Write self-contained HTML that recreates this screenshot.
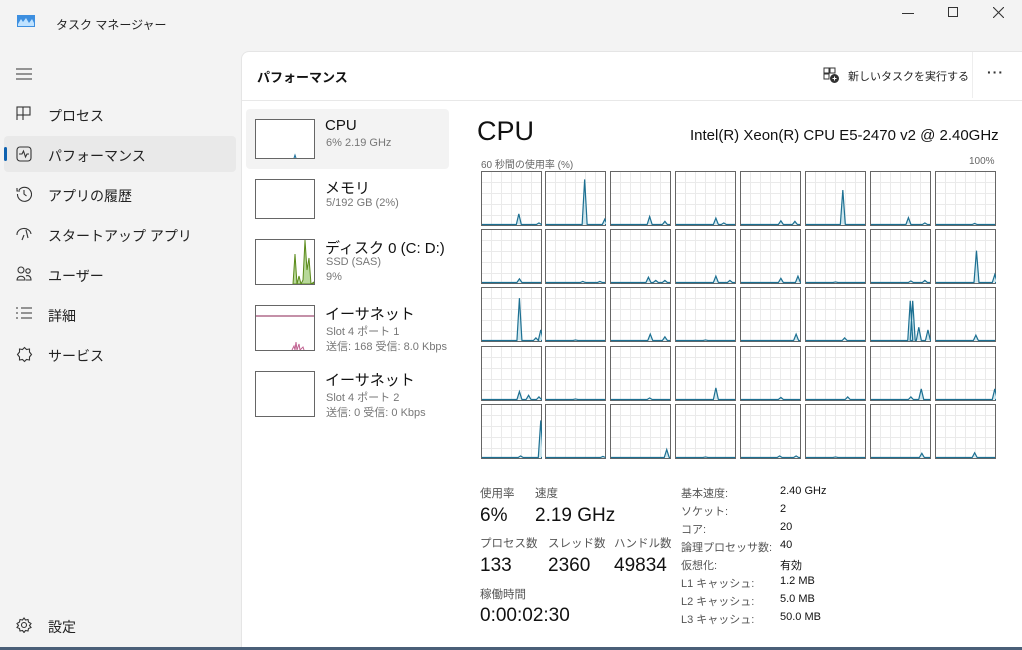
<!DOCTYPE html>
<html><head><meta charset="utf-8"><style>
*{margin:0;padding:0;box-sizing:border-box}
body{width:1022px;height:650px;overflow:hidden;background:#f3f3f3;font-family:"Liberation Sans","Noto Sans CJK JP",sans-serif;color:#1a1a1a;position:relative}
.a{position:absolute;white-space:nowrap}
.nav{font-size:14px;color:#222}
.ic{position:absolute}
.thumb{position:absolute;width:60px;height:46px;border:1px solid #666;background:#fff}
.t1{font-size:15px;color:#111}
.t2{font-size:11px;color:#777}
.lbl{font-size:11.5px;color:#555}
.big{font-size:19px;color:#111}
.k{font-size:11px;color:#555}
.v{font-size:11px;color:#111}
</style></head><body>
<svg class="ic" style="left:17px;top:15px" width="18" height="12"><rect width="18" height="12" fill="#3d8fe0"/><path d="M1 9 L4 4 L6 7 L9 3 L12 8 L15 4 L17 8 V11 H1Z" fill="#bfe2ff"/></svg>
<div class="a" style="left:56px;top:16px;font-size:12px;color:#222">タスク マネージャー</div>
<div class="a" style="left:902px;top:13px;width:12px;border-top:1px solid #333"></div>
<div class="a" style="left:948px;top:7px;width:10px;height:10px;border:1px solid #333"></div>
<svg class="ic" style="left:993px;top:7px" width="11" height="11"><path d="M0 0L11 11M11 0L0 11" stroke="#333" stroke-width="1.1"/></svg>
<svg class="ic" style="left:16px;top:68px" width="16" height="12"><path d="M0 1H16M0 6H16M0 11H16" stroke="#333" stroke-width="1.1"/></svg>
<div class="a" style="left:4px;top:136px;width:232px;height:36px;background:#e9e9e9;border-radius:4px"></div>
<div class="a" style="left:4px;top:147px;width:3px;height:14px;background:#0f62b0;border-radius:2px"></div>
<svg class="ic" style="left:16px;top:106px" width="16" height="16" fill="none" stroke="#333" stroke-width="1.1"><rect x="1" y="1" width="13" height="8"/><path d="M7 1V14M1 9V14"/></svg>
<div class="a nav" style="left:48px;top:106px">プロセス</div>
<svg class="ic" style="left:16px;top:146px" width="16" height="16" fill="none" stroke="#333" stroke-width="1.1"><rect x="1" y="1" width="14" height="14" rx="3"/><path d="M3 8H6L7.5 5L9.5 11L11 8H13"/></svg>
<div class="a nav" style="left:48px;top:146px">パフォーマンス</div>
<svg class="ic" style="left:16px;top:186px" width="16" height="16" fill="none" stroke="#333" stroke-width="1.1"><path d="M3 4A7 7 0 1 1 1.5 8"/><path d="M1 2V5H4M8 4V8L10.5 10"/></svg>
<div class="a nav" style="left:48px;top:186px">アプリの履歴</div>
<svg class="ic" style="left:16px;top:227px" width="17" height="14" fill="none" stroke="#333" stroke-width="1.1"><path d="M1 8A7 6 0 0 1 15 7M8 8L6 13M10 3L12 11"/></svg>
<div class="a nav" style="left:48px;top:226px">スタートアップ アプリ</div>
<svg class="ic" style="left:16px;top:266px" width="17" height="16" fill="none" stroke="#333" stroke-width="1.1"><circle cx="5" cy="4" r="3"/><circle cx="12" cy="5" r="2.2"/><path d="M1 14C1 9 9 9 9 14ZM10 14H15C15 10 12 9 10 10"/></svg>
<div class="a nav" style="left:48px;top:266px">ユーザー</div>
<svg class="ic" style="left:16px;top:307px" width="17" height="13" fill="none" stroke="#333" stroke-width="1.1"><path d="M0 1H2M5 1H16M0 6H2M5 6H16M0 11H2M5 11H16"/></svg>
<div class="a nav" style="left:48px;top:306px">詳細</div>
<svg class="ic" style="left:16px;top:346px" width="17" height="17" fill="none" stroke="#333" stroke-width="1.1"><path d="M8.5 1.5L10.5 3.5L13.5 3L13.5 6L15.5 8.5L13.5 11L13.5 14L10.5 13.5L8.5 15.5L6.5 13.5L3.5 14L3.5 11L1.5 8.5L3.5 6L3.5 3L6.5 3.5Z"/></svg>
<div class="a nav" style="left:48px;top:346px">サービス</div>
<svg class="ic" style="left:16px;top:617px" width="16" height="16" fill="none" stroke="#333" stroke-width="1.1"><circle cx="8" cy="8" r="2.5"/><path d="M8 1L9.5 3L12 2.5L12.5 5L15 6.5L13.5 8.5L15 10.5L12.5 11.5L12 14L9.5 13.5L8 15.5L6.5 13.5L4 14L3.5 11.5L1 10.5L2.5 8.5L1 6.5L3.5 5L4 2.5L6.5 3Z"/></svg>
<div class="a nav" style="left:48px;top:617px">設定</div>
<div class="a" style="left:241px;top:51px;width:781px;height:596px;background:#fff;border-top-left-radius:8px;border-left:1px solid #e5e5e5;border-top:1px solid #e5e5e5"></div>
<div class="a" style="left:242px;top:100px;width:780px;height:1px;background:#e8e8e8"></div>
<div class="a" style="left:257px;top:67px;font-size:13px;color:#111;font-weight:bold">パフォーマンス</div>
<svg class="ic" style="left:823px;top:67px" width="17" height="16" fill="none" stroke="#333" stroke-width="1"><rect x="1" y="1" width="5" height="5"/><rect x="7" y="1" width="5" height="5"/><rect x="1" y="7" width="5" height="5"/><circle cx="11.5" cy="11.5" r="4" fill="#333"/><path d="M11.5 9.5V13.5M9.5 11.5H13.5" stroke="#fff"/></svg>
<div class="a" style="left:848px;top:68px;font-size:11px;color:#222">新しいタスクを実行する</div>
<div class="a" style="left:972px;top:52px;width:1px;height:46px;background:#eee"></div>
<div class="a" style="left:987px;top:64px;font-size:14px;color:#333;letter-spacing:1px;font-weight:bold">···</div>
<div class="a" style="left:246px;top:109px;width:203px;height:60px;background:#f3f3f3;border-radius:4px"></div>
<div class="thumb" style="left:255px;top:119px;height:40px"><svg width="58" height="38"><path d="M38 38L39 35L40 38" stroke="#1a6f9a" fill="#bde"/></svg></div>
<div class="a t1" style="left:325px;top:117px">CPU</div><div class="a t2" style="left:326px;top:137px">6%  2.19 GHz</div>
<div class="thumb" style="left:255px;top:179px;height:40px"></div>
<div class="a t1" style="left:325px;top:177px">メモリ</div><div class="a t2" style="left:326px;top:197px">5/192 GB (2%)</div>
<div class="thumb" style="left:255px;top:239px"><svg width="58" height="44"><path d="M37 44L39 14L41 44L43 36L45 44L47 40L49 0L51 30L53 18L55 44L58 42V44Z" fill="#b8d89a" stroke="#5a8a1a" stroke-width="1"/></svg></div>
<div class="a t1" style="left:325px;top:237px">ディスク 0 (C: D:)</div><div class="a t2" style="left:326px;top:256px">SSD (SAS)</div><div class="a t2" style="left:326px;top:271px">9%</div>
<div class="thumb" style="left:255px;top:305px"><svg width="58" height="44"><path d="M0 10H58" stroke="#8a2050"/><path d="M36 44L38 40L39 44L40 36L41 44L43 38L44 44L47 41L48 44" stroke="#c06090" fill="none"/></svg></div>
<div class="a t1" style="left:325px;top:303px">イーサネット</div><div class="a t2" style="left:326px;top:323px">Slot 4 ポート 1</div><div class="a t2" style="left:326px;top:338px">送信: 168 受信: 8.0 Kbps</div>
<div class="thumb" style="left:255px;top:371px"></div>
<div class="a t1" style="left:325px;top:369px">イーサネット</div><div class="a t2" style="left:326px;top:389px">Slot 4 ポート 2</div><div class="a t2" style="left:326px;top:404px">送信: 0 受信: 0 Kbps</div>
<div class="a" style="left:451px;top:101px;width:20px;height:546px;background:#fff"></div>
<div class="a" style="left:477px;top:116px;font-size:27px;color:#111">CPU</div>
<div class="a" style="left:690px;top:127px;font-size:15px;color:#111">Intel(R) Xeon(R) CPU E5-2470 v2 @ 2.40GHz</div>
<div class="a" style="left:481px;top:156px;font-size:10px;color:#666">60 秒間の使用率 (%)</div>
<div class="a" style="left:969px;top:156px;font-size:10px;color:#666">100%</div>
<div id="grid"></div>
<div class="a lbl" style="left:480px;top:485px">使用率</div><div class="a lbl" style="left:535px;top:485px">速度</div>
<div class="a big" style="left:480px;top:505px">6%</div><div class="a big" style="left:535px;top:505px">2.19 GHz</div>
<div class="a lbl" style="left:480px;top:535px">プロセス数</div><div class="a lbl" style="left:548px;top:535px">スレッド数</div><div class="a lbl" style="left:614px;top:535px">ハンドル数</div>
<div class="a big" style="left:480px;top:555px">133</div><div class="a big" style="left:548px;top:555px">2360</div><div class="a big" style="left:614px;top:555px">49834</div>
<div class="a lbl" style="left:480px;top:586px">稼働時間</div>
<div class="a big" style="left:480px;top:605px">0:00:02:30</div>
<div class="a k" style="left:681px;top:485px">基本速度:</div><div class="a v" style="left:780px;top:485px">2.40 GHz</div>
<div class="a k" style="left:681px;top:503px">ソケット:</div><div class="a v" style="left:780px;top:503px">2</div>
<div class="a k" style="left:681px;top:521px">コア:</div><div class="a v" style="left:780px;top:521px">20</div>
<div class="a k" style="left:681px;top:539px">論理プロセッサ数:</div><div class="a v" style="left:780px;top:539px">40</div>
<div class="a k" style="left:681px;top:557px">仮想化:</div><div class="a v" style="left:780px;top:557px">有効</div>
<div class="a k" style="left:681px;top:575px">L1 キャッシュ:</div><div class="a v" style="left:780px;top:575px">1.2 MB</div>
<div class="a k" style="left:681px;top:593px">L2 キャッシュ:</div><div class="a v" style="left:780px;top:593px">5.0 MB</div>
<div class="a k" style="left:681px;top:611px">L3 キャッシュ:</div><div class="a v" style="left:780px;top:611px">50.0 MB</div>
<div class="a" style="left:0;top:647px;width:1022px;height:3px;background:#4a5f78"></div>
<script>
var xs=[481,545,610,675,740,805,870,935],ys=[171,229,287,346,404];
var sp=[
[[.62,.2],[.95,.03]],[[.65,.85],[.98,.1]],[[.65,.15],[.9,.06]],[[.67,.12],[.8,.03]],[[.67,.07],[.9,.06]],[[.62,.65]],[[.63,.13],[.9,.03]],[[.65,.02]],
[[.63,.07]],[[.62,.02],[.9,.02]],[[.63,.1],[.75,.04],[.9,.04]],[[.67,.12],[.9,.04]],[[.67,.08],[.95,.12]],[[.5,.01]],[[.67,.03],[.9,.04]],[[.68,.6],[.98,.15]],
[[.63,.8],[.9,.05],[.98,.2]],[[.5,.01]],[[.66,.12],[.9,.07]],[[.5,.01]],[[.92,.12]],[[.65,.05]],[[.66,.75],[.7,.75],[.8,.25],[.95,.2]],[[.67,.1]],
[[.63,.15],[.78,.08],[.95,.05]],[[.5,.01]],[[.65,.03]],[[.67,.22]],[[.67,.04]],[[.7,.05]],[[.67,.05],[.84,.2]],[[.98,.2]],
[[.65,.03],[.98,.7]],[[.95,.02]],[[.93,.15]],[[.5,.01]],[[.65,.03],[.92,.03]],[[.5,.01]],[[.85,.08]],[[.65,.09]]];
var h='';
for(var r=0;r<5;r++)for(var c=0;c<8;c++){
 var w=61,H=55,s='<svg class="ic" style="left:'+xs[c]+'px;top:'+ys[r]+'px" width="'+w+'" height="'+H+'">';
 s+='<rect x=".5" y=".5" width="'+(w-1)+'" height="'+(H-1)+'" fill="#fff" stroke="#666"/>';
 for(var i=1;i<6;i++)s+='<path d="M'+(i*10+.5)+' 1V'+(H-1)+'" stroke="#eaeaea"/>';
 for(var j=1;j<5;j++)s+='<path d="M1 '+(j*11+.5)+'H'+(w-1)+'" stroke="#eaeaea"/>';
 var p='M1 '+(H-1.5),L=sp[r*8+c];
 L.forEach(function(q){var x=q[0]*w,y=H-1.5-q[1]*(H-2);p+=' L'+(x-2.5)+' '+(H-1.5)+' L'+x+' '+y+' L'+(x+2.5)+' '+(H-1.5);});
 p+=' L'+(w-1)+' '+(H-1.5);
 s+='<path d="'+p+'" fill="#cfe7ee" stroke="#1d7092" stroke-width="1.2"/></svg>';
 h+=s;}
document.getElementById('grid').innerHTML=h;
</script>
</body></html>
